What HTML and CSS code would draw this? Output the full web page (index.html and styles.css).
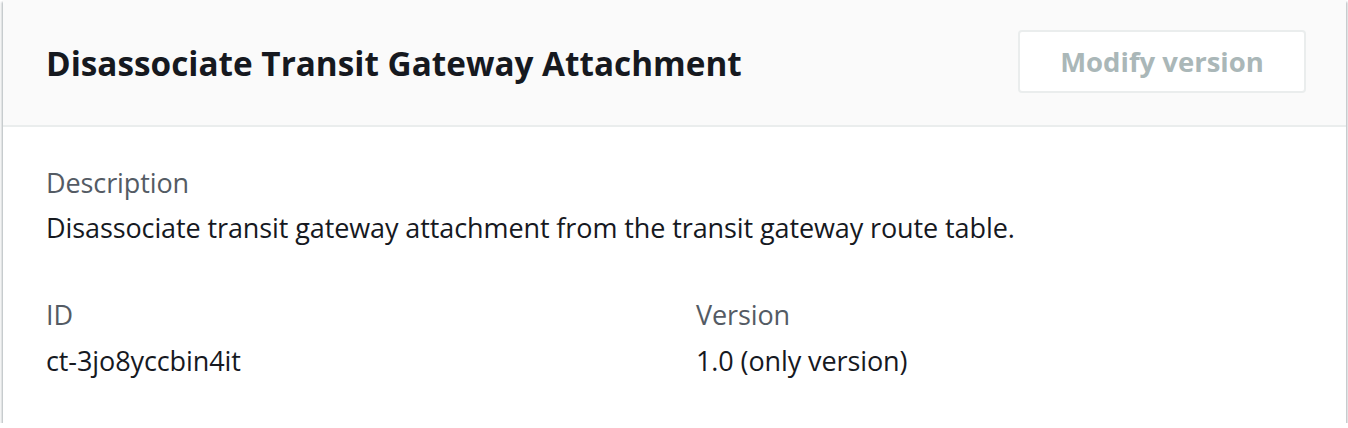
FILE: index.html
```html
<!DOCTYPE html>
<html>
<head>
<meta charset="utf-8">
<link rel="stylesheet" href="styles.css">
</head>
<body>
<div class="card">
  <div class="card-header">
    <h2 class="title">Disassociate Transit Gateway Attachment</h2>
    <button class="btn" disabled>Modify version</button>
  </div>
  <div class="card-body">
    <div class="field">
      <div class="label">Description</div>
      <div class="value">Disassociate transit gateway attachment from the transit gateway route table.</div>
    </div>
    <div class="grid">
      <div class="field">
        <div class="label">ID</div>
        <div class="value">ct-3jo8yccbin4it</div>
      </div>
      <div class="field">
        <div class="label">Version</div>
        <div class="value">1.0 (only version)</div>
      </div>
    </div>
  </div>
</div>
</body>
</html>
```
FILE: styles.css
```css
html, body {
  margin: 0;
  padding: 0;
  background: #ffffff;
}
body {
  font-family: "Open Sans", "Noto Sans", sans-serif;
  color: #16191f;
}
.card {
  margin: 0 2px 0 3px;
  height: 423px;
  background: #ffffff;
  box-shadow: 0 2px 2px rgba(0, 28, 36, 0.3), 2px 2px 2px rgba(0, 28, 36, 0.15), -2px 2px 2px rgba(0, 28, 36, 0.15);
}
.card-header {
  height: 125px;
  background: #fafafa;
  border-bottom: 2px solid #eaeded;
  display: flex;
  align-items: center;
  justify-content: space-between;
  padding: 0 40px 0 43px;
}
.title {
  margin: 0;
  font-size: 33.3px;
  font-weight: 700;
  color: #16191f;
}
.btn {
  width: 288px;
  height: 63px;
  margin-top: -2px;
  background: #ffffff;
  border: 2px solid #eaeded;
  border-radius: 4px;
  color: #aab7b8;
  font-family: inherit;
  font-size: 27.5px;
  font-weight: 700;
}
.card-body {
  padding: 33px 43px 0 43px;
}
.label {
  font-size: 27px;
  letter-spacing: -0.1px;
  line-height: 45px;
  color: #545b64;
}
.value {
  font-size: 27px;
  letter-spacing: -0.1px;
  line-height: 45px;
  color: #16191f;
}
.grid {
  margin-top: 42px;
  display: grid;
  grid-template-columns: 650px 1fr;
}
.grid .value {
  line-height: 47px;
}
```
